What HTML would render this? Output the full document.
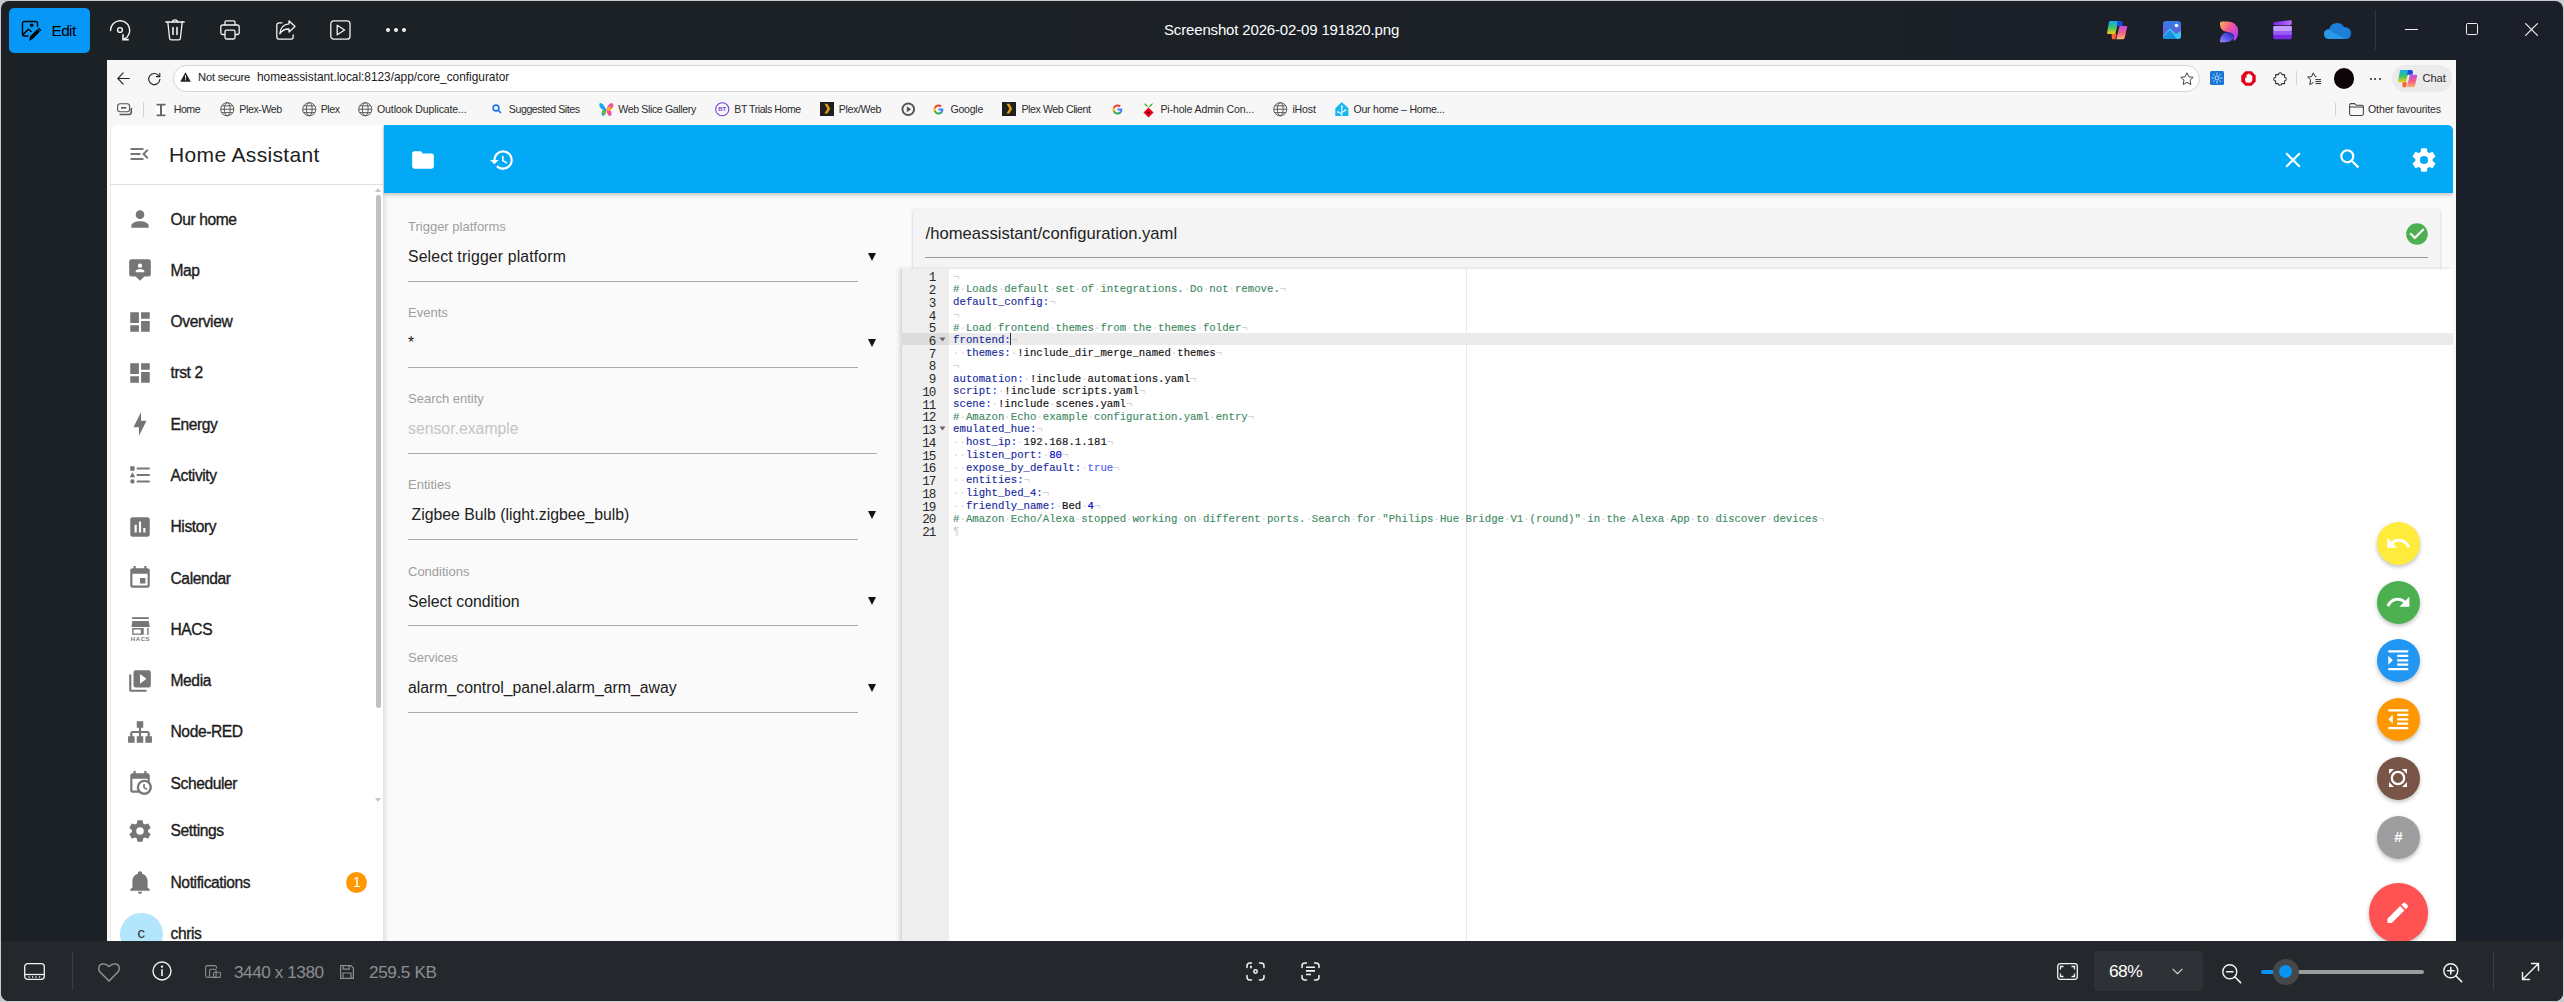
<!DOCTYPE html>
<html><head><meta charset="utf-8">
<style>
*{box-sizing:border-box;margin:0;padding:0}
html,body{width:2564px;height:1002px;overflow:hidden;background:#c9cacb;font-family:"Liberation Sans",sans-serif}
.a{position:absolute}
svg{position:absolute;overflow:visible}
#win{left:1px;top:1px;width:2562px;height:1000px;border-radius:8px;overflow:hidden;background:linear-gradient(90deg,#1c2125 0%,#1c2126 40%,#1b1f29 100%)}
#bot{left:0;top:940px;width:2562px;height:60px;background:#24282c}
#br{left:107px;top:60px;width:2349px;height:881px;background:#f7f7f7}
.bm{position:absolute;top:103px;font-size:10.6px;color:#2b2b2b;white-space:nowrap;letter-spacing:-0.15px}
#ha{left:110px;top:124.5px;width:2342.5px;height:816.5px;background:#fafafa;border-radius:7px 5px 0 0;overflow:hidden}
.si{position:absolute;left:60.5px;font-size:15.6px;color:#1c1c1c;white-space:nowrap;-webkit-text-stroke:0.35px #1c1c1c;letter-spacing:-0.4px}
.ic{position:absolute;left:20px;width:24px;height:24px}
.lab{position:absolute;left:298px;font-size:13px;color:#9e9e9e;white-space:nowrap}
.val{position:absolute;left:298px;font-size:15.8px;color:#212121;white-space:nowrap}
.ul{position:absolute;left:298px;width:451px;height:1px;background:#a8a8a8}
.arr{position:absolute;left:758px;width:0;height:0;border-left:4.5px solid transparent;border-right:4.5px solid transparent;border-top:8.5px solid #111}
.code{position:absolute;-webkit-text-stroke:0.15px currentColor;font-family:"Liberation Mono",monospace;font-size:10.68px;line-height:12.74px;white-space:pre}
.ln{position:absolute;left:0;width:35.5px;text-align:right;font-family:"Liberation Mono",monospace;font-size:12.6px;letter-spacing:-1.12px;line-height:12.74px;color:#2a2a2a}
.cm{color:#3f8a63}.ky{color:#1a2a9c}.kw{color:#2a3cf5}.nm{color:#0000cd}.bl{color:#585cf6}.tx{color:#111}.iv{color:#d2d2d2;-webkit-text-stroke:0}
.fab{position:absolute;border-radius:50%;box-shadow:0 2px 4px rgba(0,0,0,.25)}
</style></head><body>
<div id="win" class="a">
  <div id="bot" class="a"></div>
</div>
<!-- BOTTOM BAR -->
<svg style="left:23.5px;top:962.5px" width="21" height="17" viewBox="0 0 21 17" fill="none" stroke="#f2f2f2" stroke-width="1.3"><rect x="0.7" y="0.7" width="19.6" height="15.6" rx="3"/><path d="M0.7 11.5H20.3"/><path d="M4.5 14H5.7M8 14H9.2M11.5 14H12.7M15 14H16.2" stroke-width="1.6"/></svg>
<div class="a" style="left:72px;top:951px;width:1px;height:39px;background:#3a3e42"></div>
<svg style="left:97.5px;top:962.5px" width="22" height="19" viewBox="0 0 22 19" fill="none" stroke="#9a9c9e" stroke-width="1.3" stroke-linejoin="round"><path d="M11 18L2.3 9.3Q0.7 7.7 0.7 5.5Q0.7 0.8 5.6 0.8Q8.7 0.8 11 3.6Q13.3 0.8 16.4 0.8Q21.3 0.8 21.3 5.5Q21.3 7.7 19.7 9.3Z"/></svg>
<svg style="left:152px;top:961px" width="20" height="20" viewBox="0 0 20 20" fill="none" stroke="#f2f2f2" stroke-width="1.4"><circle cx="10" cy="10" r="9"/><path d="M10 8.3V15" stroke-width="1.6"/><circle cx="10" cy="5.6" r="0.5" fill="#f2f2f2"/></svg>
<svg style="left:204.5px;top:965px" width="16" height="13" viewBox="0 0 16 13" fill="none" stroke="#8c8e90" stroke-width="1.1"><path d="M11.5 3.5V2.5Q11.5 0.6 9.6 0.6H2.5Q0.6 0.6 0.6 2.5V10.5Q0.6 12.4 2.5 12.4H4.5"/><rect x="4.6" y="4.3" width="6.5" height="8.1" rx="1.5"/><rect x="8.5" y="7.3" width="6.9" height="5.1" rx="1"/></svg>
<div class="a" style="left:234px;top:962px;font-size:17.2px;color:#8c8e90;white-space:nowrap;letter-spacing:-0.45px">3440 x 1380</div>
<svg style="left:339.5px;top:965px" width="14" height="14" viewBox="0 0 14 14" fill="none" stroke="#8c8e90" stroke-width="1.2"><path d="M0.6 0.6H11L13.4 3V13.4H0.6Z"/><path d="M3.2 0.6V4.2H9.2V0.6M3 13.4V8H11V13.4"/></svg>
<div class="a" style="left:369px;top:962px;font-size:17.2px;color:#8c8e90;white-space:nowrap;letter-spacing:-0.4px">259.5 KB</div>
<svg style="left:1245.5px;top:961.5px" width="19" height="19" viewBox="0 0 19 19" fill="none" stroke="#f2f2f2" stroke-width="1.5" stroke-linecap="round"><path d="M1 5.5V4Q1 1 4 1H5.5M13.5 1H15Q18 1 18 4V5.5M18 13.5V15Q18 18 15 18H13.5M5.5 18H4Q1 18 1 15V13.5"/><circle cx="9.5" cy="9.5" r="1.7"/><path d="M5 4.5V5.5" stroke-width="1.8"/></svg>
<svg style="left:1300.5px;top:961.5px" width="19" height="19" viewBox="0 0 19 19" fill="none" stroke="#f2f2f2" stroke-width="1.5" stroke-linecap="round"><path d="M1 5.5V4Q1 1 4 1H5.5M13.5 1H15Q18 1 18 4V5.5M18 13.5V15Q18 18 15 18H13.5M5.5 18H4Q1 18 1 15V13.5"/><path d="M5 5.3H14M5 8.9H14M5 12.5H10" stroke-linecap="butt" stroke-width="1.6"/></svg>
<svg style="left:2056.5px;top:962.5px" width="21" height="17" viewBox="0 0 21 17" fill="none" stroke="#f2f2f2" stroke-width="1.3"><rect x="0.7" y="0.7" width="19.6" height="15.6" rx="2.5"/><path d="M3.5 6.5V3.5H6.5M14.5 3.5H17.5V6.5M17.5 10.5V13.5H14.5M6.5 13.5H3.5V10.5"/></svg>
<div class="a" style="left:2094.3px;top:951px;width:108.5px;height:39.5px;border-radius:4px;background:#2e3236"></div>
<div class="a" style="left:2109px;top:961px;font-size:17.4px;color:#fff;white-space:nowrap;letter-spacing:-0.6px">68%</div>
<svg style="left:2172px;top:967.5px" width="11" height="7" viewBox="0 0 11 7" fill="none" stroke="#d8d8d8" stroke-width="1.1"><path d="M0.6 0.8L5.5 5.7L10.4 0.8"/></svg>
<svg style="left:2221.5px;top:963.5px" width="20" height="20" viewBox="0 0 20 20" fill="none" stroke="#f2f2f2" stroke-width="1.4" stroke-linecap="round"><circle cx="7.8" cy="7.8" r="7"/><path d="M12.8 12.8L18.6 18.6M4.6 7.8H11" stroke-width="1.6"/></svg>
<div class="a" style="left:2261px;top:969.5px;width:20px;height:4px;border-radius:2px;background:#0a93f5"></div>
<div class="a" style="left:2290px;top:969.5px;width:134px;height:4px;border-radius:2px;background:#9a9c9e"></div>
<div class="a" style="left:2272.5px;top:958.5px;width:26px;height:26px;border-radius:50%;background:#454749"></div>
<div class="a" style="left:2279px;top:965px;width:13px;height:13px;border-radius:50%;background:#0a93f5"></div>
<svg style="left:2442.5px;top:963px" width="20" height="20" viewBox="0 0 20 20" fill="none" stroke="#f2f2f2" stroke-width="1.4" stroke-linecap="round"><circle cx="7.8" cy="7.8" r="7"/><path d="M12.8 12.8L18.6 18.6M4.6 7.8H11M7.8 4.6V11" stroke-width="1.6"/></svg>
<div class="a" style="left:2492.5px;top:951px;width:1px;height:39px;background:#3a3e42"></div>
<svg style="left:2521px;top:962px" width="19" height="19" viewBox="0 0 19 19" fill="none" stroke="#f2f2f2" stroke-width="1.4" stroke-linecap="round"><path d="M1.5 17.5L17.5 1.5M10.5 1.5H17.5V8.5M1.5 10.5V17.5H8.5"/></svg>
<!-- TITLE BAR -->
<div class="a" style="left:9px;top:8px;width:81px;height:45px;border-radius:5px;background:#0797f6"></div>
<svg style="left:19.8px;top:19.5px" width="22" height="22" viewBox="0 0 22 22" fill="none" stroke="#000" stroke-width="1.4">
  <path d="M2.5 14V3.5Q2.5 1.5 4.5 1.5H15.5Q17.5 1.5 17.5 3.5V7"/>
  <path d="M2.5 14Q2.5 16 4.5 16H8.5"/>
  <path d="M3 14.5L8.5 9.2L11.5 11.8"/>
  <circle cx="11.7" cy="5.2" r="1.1"/>
  <path d="M9 21L10.3 16.3L17.3 9.3L19.8 11.8L12.8 18.8Z" fill="#000" stroke="none"/>
  <path d="M17.8 8.8L18.9 7.7L21.3 10.1L20.2 11.2Z" fill="#000" stroke="none"/>
</svg>
<div class="a" style="left:51.5px;top:21.5px;font-size:15.4px;color:#000;letter-spacing:-0.6px">Edit</div>
<!-- rotate -->
<svg style="left:105px;top:15px" width="30" height="30" viewBox="0 0 30 30" fill="none" stroke="#f4f4f4" stroke-width="1.4" stroke-linecap="round">
  <path d="M5.5 15.5A9.6 9.6 0 1 1 19.3 24"/>
  <path d="M18 19.3V24.6H23.8" stroke-linecap="butt" stroke-width="1.6"/>
  <circle cx="15" cy="15" r="2.4"/>
</svg>
<!-- trash -->
<svg style="left:165px;top:19px" width="21" height="22" viewBox="0 0 21 22" fill="none" stroke="#f2f2f2" stroke-width="1.3" stroke-linecap="round">
  <path d="M0.8 3H19.2"/><path d="M7.5 3Q7.5 0.8 10 0.8Q12.5 0.8 12.5 3"/>
  <path d="M2.8 3L4.6 19.3Q4.8 20.8 6.3 20.8H13.7Q15.2 20.8 15.4 19.3L17.2 3"/>
  <path d="M8 8.5V15.5M12 8.5V15.5" stroke-width="1.6"/>
</svg>
<!-- print -->
<svg style="left:220px;top:20px" width="21" height="20" viewBox="0 0 21 20" fill="none" stroke="#f2f2f2" stroke-width="1.3" stroke-linejoin="round">
  <path d="M5 5V2.2Q5 0.8 6.4 0.8H13.6Q15 0.8 15 2.2V5"/>
  <path d="M5 14.5H2.8Q0.8 14.5 0.8 12.5V7Q0.8 5 2.8 5H17.2Q19.2 5 19.2 7V12.5Q19.2 14.5 17.2 14.5H15"/>
  <rect x="5" y="10.2" width="10" height="8.8" rx="1.4"/>
</svg>
<!-- share -->
<svg style="left:276px;top:20px" width="20" height="20" viewBox="0 0 20 20" fill="none" stroke="#f2f2f2" stroke-width="1.3" stroke-linejoin="round" stroke-linecap="round">
  <path d="M6 2.8H3.3Q0.8 2.8 0.8 5.3V16.7Q0.8 19.2 3.3 19.2H14.7Q17.2 19.2 17.2 16.7V15"/>
  <path d="M13 0.8L19 6.4L13 12V9Q7 8.7 3.8 13.8Q4.5 4.5 13 3.8Z"/>
</svg>
<!-- slideshow -->
<svg style="left:330px;top:20px" width="21" height="20" viewBox="0 0 21 20" fill="none" stroke="#f2f2f2" stroke-width="1.3" stroke-linejoin="round">
  <rect x="0.8" y="0.8" width="19.2" height="18.4" rx="3"/>
  <path d="M7.2 5.2L14.6 10L7.2 14.8Z"/>
</svg>
<div class="a" style="left:386px;top:28px;width:4px;height:4px;border-radius:2px;background:#f2f2f2"></div>
<div class="a" style="left:394px;top:28px;width:4px;height:4px;border-radius:2px;background:#f2f2f2"></div>
<div class="a" style="left:402px;top:28px;width:4px;height:4px;border-radius:2px;background:#f2f2f2"></div>
<div class="a" style="left:1164px;top:21px;font-size:15px;color:#fff;white-space:nowrap;letter-spacing:-0.16px">Screenshot 2026-02-09 191820.png</div>
<!-- app icons right -->
<svg style="left:2100px;top:15px" width="30" height="30" viewBox="0 0 30 30">
  <defs><linearGradient id="cp1" x1="0" y1="0" x2="0" y2="1"><stop offset="0" stop-color="#14a8f5"/><stop offset=".5" stop-color="#3cc46a"/><stop offset="1" stop-color="#f7d10a"/></linearGradient>
  <linearGradient id="cp2" x1="0" y1="0" x2="0" y2="1"><stop offset="0" stop-color="#b84ee8"/><stop offset=".5" stop-color="#f25e8a"/><stop offset="1" stop-color="#fdb46c"/></linearGradient></defs>
  <path d="M9.6 6H17.6Q18.6 6 18.3 7.1L15.3 19H8.1Q6.8 19 7.1 17.7L9 6.9Q9.2 6 9.6 6Z" fill="url(#cp1)"/>
  <path d="M17.6 6H20.8Q22.8 6 22.6 8.3L22.3 11.1H16.6Z" fill="#1f46dd"/>
  <path d="M20.1 10.9H26Q27.3 10.9 27.1 12.2L24.8 22.6Q24.4 24.2 23 24.2H16.3L19.3 11.7Q19.5 10.9 20.1 10.9Z" fill="url(#cp2)"/>
  <path d="M11.6 19H16.6L15.3 24.2H13.1Q11.6 24.2 11.8 22.7Z" fill="#ff5f3a"/>
</svg>
<svg style="left:2163px;top:21px" width="18" height="18" viewBox="0 0 18 18">
  <defs><linearGradient id="ph" x1="0" y1="0" x2="0" y2="1"><stop offset="0" stop-color="#2f7fe6"/><stop offset="1" stop-color="#7b4fd8"/></linearGradient></defs>
  <rect width="18" height="18" rx="3" fill="url(#ph)"/>
  <path d="M0 15L7 7L13 13L18 10V15Q18 18 15 18H3Q0 18 0 15Z" fill="#3cc3f5"/>
  <path d="M0 16L7 9L14 18H3Q0 18 0 16Z" fill="#1a8fe0"/>
  <circle cx="13.5" cy="4.5" r="1.8" fill="#fff"/>
</svg>
<svg style="left:2219.8px;top:20.7px" width="18.5" height="21.5" viewBox="0 0 18.5 21.5">
  <defs><linearGradient id="dz1" x1="0" y1="0" x2="1" y2="0.7"><stop offset="0" stop-color="#ffb347"/><stop offset=".5" stop-color="#f2569a"/><stop offset="1" stop-color="#b23cf5"/></linearGradient>
  <linearGradient id="dz2" x1="0" y1="1" x2="1" y2="0"><stop offset="0" stop-color="#a98bff"/><stop offset=".4" stop-color="#5a5cf0"/><stop offset="1" stop-color="#22209a"/></linearGradient></defs>
  <path d="M0 2Q0 0.5 2 0.5H7.5Q18.2 0.8 18.2 11Q18.2 17.5 13.8 20Q13.5 11.5 6.5 10.8Q0 10 0 3Z" fill="url(#dz1)"/>
  <path d="M0 21.2Q0 11.5 8 11.2Q13.2 11.2 14.3 15.3Q12.2 21.2 5.5 21.2Z" fill="url(#dz2)"/>
</svg>
<svg style="left:2272.5px;top:20px" width="19" height="19.5" viewBox="0 0 19 19.5">
  <defs><linearGradient id="cl1" x1="0" y1="0" x2="1" y2="0"><stop offset="0" stop-color="#7a22e8"/><stop offset="1" stop-color="#c070ff"/></linearGradient></defs>
  <path d="M0.3 3.5Q0.3 2.2 2 2L17.5 0.2Q18.7 0.2 18.7 1.5V3.5Q18.7 5 17 5.2H2Q0.3 5.2 0.3 4Z" fill="url(#cl1)"/>
  <rect x="0.3" y="6" width="18.5" height="13.3" rx="1.8" fill="#7d2ae8"/>
  <rect x="0.3" y="6" width="18.5" height="5" rx="1.2" fill="#c49cff"/>
  <rect x="0.3" y="11" width="18.5" height="3.8" fill="#9b5cf5"/>
</svg>
<svg style="left:2324px;top:22px" width="27" height="17" viewBox="0 0 27 17">
  <path d="M6 17Q0 17 0 12Q0 7.5 5 7Q7 1 13 1Q18 1 20 5Q27 5 27 11.5Q27 17 21 17Z" fill="#1e7fd8"/>
  <path d="M6 17Q0 17 0 12Q0 8.5 4 7.5L12 12L21 17Z" fill="#2a9ae8"/>
</svg>
<div class="a" style="left:2375px;top:10px;width:1px;height:40px;background:#32363d"></div>
<div class="a" style="left:2405px;top:28.5px;width:13px;height:1.2px;background:#f0f0f0"></div>
<div class="a" style="left:2466px;top:23px;width:12px;height:12px;border:1.2px solid #f0f0f0;border-radius:1.5px"></div>
<svg style="left:2525px;top:22.5px" width="13" height="13" viewBox="0 0 13 13" stroke="#f0f0f0" stroke-width="1.2" stroke-linecap="round"><path d="M0.6 0.6L12.4 12.4M12.4 0.6L0.6 12.4"/></svg>

<div id="br" class="a"></div>
<!-- BROWSER TOOLBAR -->
<svg style="left:117px;top:72px" width="13" height="13" viewBox="0 0 13 13" fill="none" stroke="#222" stroke-width="1.1" stroke-linecap="round"><path d="M12.3 6.5H0.8M6.2 0.9L0.8 6.5L6.2 12.1"/></svg>
<svg style="left:148px;top:72px" width="13" height="13" viewBox="0 0 13 13" fill="none" stroke="#222" stroke-width="1.1" stroke-linecap="round"><path d="M11.2 4.3A5.6 5.6 0 1 0 11.9 7.4"/><path d="M11.8 1.2V4.6H8.4" stroke-linejoin="round"/></svg>
<div class="a" style="left:172.5px;top:65px;width:2027px;height:26.5px;border-radius:13.5px;background:#fff;border:1px solid #d4d4d4"></div>
<svg style="left:180px;top:72px" width="11" height="10" viewBox="0 0 11 10"><path d="M5.5 0.3L10.8 9.7H0.2Z" fill="#222"/><path d="M5 3.2H6V6.4H5ZM5 7.3H6V8.3H5Z" fill="#fff"/></svg>
<div class="a" style="left:198px;top:71px;font-size:11.2px;color:#333;white-space:nowrap;letter-spacing:-0.2px;-webkit-text-stroke:0.15px #333">Not secure</div>
<div class="a" style="left:257px;top:70px;font-size:11.9px;color:#1b1b1b;white-space:nowrap;letter-spacing:-0.02px">homeassistant.local:8123/app/core_configurator</div>
<svg style="left:2180px;top:71.5px" width="14" height="14" viewBox="0 0 14 14" fill="none" stroke="#444" stroke-width="1" stroke-linejoin="round"><path d="M7 0.8L8.9 4.8L13.2 5.3L10 8.2L10.9 12.5L7 10.4L3.1 12.5L4 8.2L0.8 5.3L5.1 4.8Z"/></svg>
<div class="a" style="left:2210px;top:71.3px;width:14px;height:14px;border-radius:1.5px;background:#1976d2"></div>
<svg style="left:2210px;top:71.3px" width="14" height="14" viewBox="0 0 14 14" fill="none" stroke="#cfe6ff" stroke-width="0.9"><circle cx="7" cy="7" r="2"/><path d="M7 1.5V3.8M7 10.2V12.5M1.5 7H3.8M10.2 7H12.5M3.1 3.1L4.7 4.7M9.3 9.3L10.9 10.9M10.9 3.1L9.3 4.7M4.7 9.3L3.1 10.9"/></svg>
<svg style="left:2240.5px;top:71px" width="15" height="15" viewBox="0 0 15 15"><path d="M4.4 0.3H10.6L14.7 4.4V10.6L10.6 14.7H4.4L0.3 10.6V4.4Z" fill="#e0001b"/><path d="M5 11.5Q3.8 9 4 7.5L4.6 6.2L5.5 7.6V4Q5.5 3.2 6.3 3.2Q7 3.2 7 4V3.3Q7 2.6 7.8 2.6Q8.5 2.6 8.5 3.3V4Q8.5 3.3 9.3 3.3Q10 3.3 10 4V5Q10 4.4 10.7 4.4Q11.3 4.4 11.3 5.1V8.5Q11.3 11.5 8.5 11.8Z" fill="#fff"/></svg>
<svg style="left:2272.5px;top:71.5px" width="14" height="14" viewBox="0 0 14 14" fill="none" stroke="#333" stroke-width="1.05" stroke-linejoin="round"><path d="M5.6 2.6Q5.6 0.7 7.3 0.7Q9 0.7 9 2.6H11.6V5.3Q13.3 5.3 13.3 7Q13.3 8.7 11.6 8.7V11.6H8.7Q8.7 13.3 7 13.3Q5.3 13.3 5.3 11.6H2.6V8.8Q0.7 8.8 0.7 7.1Q0.7 5.4 2.6 5.4V2.6Z"/></svg>
<div class="a" style="left:2295.5px;top:71px;width:1px;height:14px;background:#d6d6d6"></div>
<svg style="left:2306.5px;top:71.5px" width="15" height="14" viewBox="0 0 15 14" fill="none" stroke="#333" stroke-width="1" stroke-linejoin="round"><path d="M6.3 0.8L8 4.5L9.5 4.7M3.6 7.7L0.7 5.1L4.6 4.6L6.3 0.8M3.6 7.7L2.8 12.6L6.6 10.5"/><path d="M8.5 7.6H14M8.5 9.6H14M8.5 11.6H14"/></svg>
<div class="a" style="left:2333.7px;top:68px;width:20.5px;height:20.5px;border-radius:50%;background:#0d0507"></div>
<div class="a" style="left:2369.5px;top:77.5px;width:2.2px;height:2.2px;border-radius:50%;background:#222"></div>
<div class="a" style="left:2374px;top:77.5px;width:2.2px;height:2.2px;border-radius:50%;background:#222"></div>
<div class="a" style="left:2378.5px;top:77.5px;width:2.2px;height:2.2px;border-radius:50%;background:#222"></div>
<div class="a" style="left:2392.3px;top:65px;width:59.5px;height:26.5px;border-radius:13.5px;background:#ebebeb"></div>
<svg style="left:2398px;top:69.5px" width="19.5" height="17.5" viewBox="7 6 20.5 18.4">
  <path d="M9.6 6H17.6Q18.6 6 18.3 7.1L15.3 19H8.1Q6.8 19 7.1 17.7L9 6.9Q9.2 6 9.6 6Z" fill="url(#cp1)"/>
  <path d="M17.6 6H20.8Q22.8 6 22.6 8.3L22.3 11.1H16.6Z" fill="#1f46dd"/>
  <path d="M20.1 10.9H26Q27.3 10.9 27.1 12.2L24.8 22.6Q24.4 24.2 23 24.2H16.3L19.3 11.7Q19.5 10.9 20.1 10.9Z" fill="url(#cp2)"/>
  <path d="M11.6 19H16.6L15.3 24.2H13.1Q11.6 24.2 11.8 22.7Z" fill="#ff5f3a"/>
</svg>
<div class="a" style="left:2422.5px;top:71.5px;font-size:11.2px;color:#2a2a2a;white-space:nowrap;letter-spacing:-0.1px">Chat</div>
<!-- BOOKMARKS -->
<svg style="left:117px;top:102.5px" width="15" height="13" viewBox="0 0 15 13" fill="none" stroke="#555" stroke-width="1.1"><rect x="0.6" y="0.8" width="12" height="8" rx="2.5"/><path d="M4 4.8H9.3" stroke-width="1.6"/><path d="M2.5 11.5H12Q14.3 11.5 14.3 9V5" stroke-width="1.5"/></svg>
<div class="a" style="left:143px;top:102px;width:1px;height:15px;background:#d4d4d4"></div>
<svg style="left:155px;top:101.5px" width="12" height="16" viewBox="0 0 12 16"><rect width="12" height="16" fill="#fff" opacity=".6"/><path d="M1.5 1.8H10.5V3.5H7V12.5H10.5V14.2H1.5V12.5H5V3.5H1.5Z" fill="#666"/></svg>
<div class="bm" style="left:173.8px;letter-spacing:-0.50px">Home</div>
<svg style="left:220px;top:102px" width="14.5" height="14.5" viewBox="0 0 15 15" fill="none" stroke="#555" stroke-width="1"><circle cx="7.5" cy="7.5" r="6.8"/><ellipse cx="7.5" cy="7.5" rx="3" ry="6.8"/><path d="M0.7 7.5H14.3M1.8 4H13.2M1.8 11H13.2"/></svg>
<div class="bm" style="left:239.3px;letter-spacing:-0.40px">Plex-Web</div>
<svg style="left:301.7px;top:102px" width="14.5" height="14.5" viewBox="0 0 15 15" fill="none" stroke="#555" stroke-width="1"><circle cx="7.5" cy="7.5" r="6.8"/><ellipse cx="7.5" cy="7.5" rx="3" ry="6.8"/><path d="M0.7 7.5H14.3M1.8 4H13.2M1.8 11H13.2"/></svg>
<div class="bm" style="left:320.7px;letter-spacing:-0.45px">Plex</div>
<svg style="left:358.3px;top:102px" width="14.5" height="14.5" viewBox="0 0 15 15" fill="none" stroke="#555" stroke-width="1"><circle cx="7.5" cy="7.5" r="6.8"/><ellipse cx="7.5" cy="7.5" rx="3" ry="6.8"/><path d="M0.7 7.5H14.3M1.8 4H13.2M1.8 11H13.2"/></svg>
<div class="bm" style="left:377px">Outlook Duplicate...</div>
<svg style="left:492px;top:104px" width="10" height="10" viewBox="0 0 10 10" fill="none" stroke="#1a73e8" stroke-width="1.6"><circle cx="4" cy="4" r="2.9"/><path d="M6.2 6.2L9 9"/></svg>
<div class="bm" style="left:508.8px;letter-spacing:-0.42px">Suggested Sites</div>
<svg style="left:599px;top:102px" width="15" height="15" viewBox="0 0 15 15"><path d="M7 7Q3 -1 0.5 1.5Q-0.5 5 4 8Q1 12 4 14Q6 14 7 9Z" fill="#1fa6e8"/><path d="M7.5 7Q10 0 14 1.5Q15.5 5 11 8Q14 11 11.5 14Q8.5 14 7.5 9Z" fill="#f24e9b"/><path d="M7.5 7Q9 4 12 5Q12 8 9 9Z" fill="#ffb900"/><path d="M3 9Q4 14 6.5 12L7 9Z" fill="#7fba00"/></svg>
<div class="bm" style="left:618.3px;letter-spacing:-0.38px">Web Slice Gallery</div>
<svg style="left:714.8px;top:102px" width="14.5" height="14.5" viewBox="0 0 15 15"><circle cx="7.5" cy="7.5" r="6.8" fill="none" stroke="#7b3fd6" stroke-width="1.1"/><text x="7.5" y="9.8" font-size="6.2" font-family="Liberation Sans" font-weight="bold" fill="#7b3fd6" text-anchor="middle">BT</text></svg>
<div class="bm" style="left:734.3px;letter-spacing:-0.45px">BT Trials Home</div>
<div class="a" style="left:819.8px;top:102.4px;width:14px;height:13.3px;background:#1f1f1f"></div>
<svg style="left:819.8px;top:102.4px" width="14" height="13.3" viewBox="0 0 14 13.3"><path d="M4.5 1.8H7.3L10.2 6.65L7.3 11.5H4.5L7.4 6.65Z" fill="#e5a00d"/></svg>
<div class="bm" style="left:838.8px;letter-spacing:-0.35px">Plex/Web</div>
<svg style="left:901px;top:102px" width="14.5" height="14.5" viewBox="0 0 15 15"><circle cx="7.5" cy="7.5" r="6" fill="none" stroke="#555" stroke-width="2"/><path d="M6 4.5L10.5 7.5L6 10.5Z" fill="#555"/></svg>
<svg style="left:933px;top:103.5px" width="11" height="11" viewBox="0 0 24 24"><path d="M22.5 12.3c0-.8-.1-1.5-.2-2.3H12v4.3h5.9a5 5 0 0 1-2.2 3.3v2.7h3.5c2.1-1.9 3.3-4.7 3.3-8z" fill="#4285f4"/><path d="M12 23c3 0 5.4-1 7.2-2.7l-3.5-2.7c-1 .7-2.2 1-3.7 1-2.9 0-5.3-1.9-6.2-4.6H2.2v2.8A11 11 0 0 0 12 23z" fill="#34a853"/><path d="M5.8 14a6.6 6.6 0 0 1 0-4.2V7H2.2a11 11 0 0 0 0 9.9z" fill="#fbbc05"/><path d="M12 5.4c1.6 0 3.1.6 4.2 1.6l3.1-3.1A11 11 0 0 0 2.2 7l3.6 2.8C6.7 7.2 9.1 5.4 12 5.4z" fill="#ea4335"/></svg>
<div class="bm" style="left:950.4px;letter-spacing:-0.25px">Google</div>
<div class="a" style="left:1001.9px;top:102.4px;width:14px;height:13.3px;background:#1f1f1f"></div>
<svg style="left:1001.9px;top:102.4px" width="14" height="13.3" viewBox="0 0 14 13.3"><path d="M4.5 1.8H7.3L10.2 6.65L7.3 11.5H4.5L7.4 6.65Z" fill="#e5a00d"/></svg>
<div class="bm" style="left:1021.4px;letter-spacing:-0.40px">Plex Web Client</div>
<svg style="left:1112px;top:103.5px" width="11" height="11" viewBox="0 0 24 24"><path d="M22.5 12.3c0-.8-.1-1.5-.2-2.3H12v4.3h5.9a5 5 0 0 1-2.2 3.3v2.7h3.5c2.1-1.9 3.3-4.7 3.3-8z" fill="#4285f4"/><path d="M12 23c3 0 5.4-1 7.2-2.7l-3.5-2.7c-1 .7-2.2 1-3.7 1-2.9 0-5.3-1.9-6.2-4.6H2.2v2.8A11 11 0 0 0 12 23z" fill="#34a853"/><path d="M5.8 14a6.6 6.6 0 0 1 0-4.2V7H2.2a11 11 0 0 0 0 9.9z" fill="#fbbc05"/><path d="M12 5.4c1.6 0 3.1.6 4.2 1.6l3.1-3.1A11 11 0 0 0 2.2 7l3.6 2.8C6.7 7.2 9.1 5.4 12 5.4z" fill="#ea4335"/></svg>
<svg style="left:1142.8px;top:101.5px" width="11" height="16" viewBox="0 0 11 16"><path d="M5.5 5.5L10.5 10.5L5.5 15.5L0.5 10.5Z" fill="#e8001c"/><circle cx="5.5" cy="10.5" r="1" fill="#000"/><path d="M5.5 5.5Q3 1 1 1.5Q2 4.5 5.5 5.5Q8 1 10 1.5Q9 4.5 5.5 5.5" fill="#3fae2a"/></svg>
<div class="bm" style="left:1160.4px">Pi-hole Admin Con...</div>
<svg style="left:1272.8px;top:102px" width="14.5" height="14.5" viewBox="0 0 15 15" fill="none" stroke="#555" stroke-width="1"><circle cx="7.5" cy="7.5" r="6.8"/><ellipse cx="7.5" cy="7.5" rx="3" ry="6.8"/><path d="M0.7 7.5H14.3M1.8 4H13.2M1.8 11H13.2"/></svg>
<div class="bm" style="left:1292.4px">iHost</div>
<svg style="left:1334.7px;top:102px" width="13.7" height="14" viewBox="0 0 13.7 14"><path d="M6.85 0.1L13.4 6.3V14H0.3V6.3Z" fill="#18b6f0"/><path d="M6.85 5V14M6.85 12.2L3.2 10M6.85 10.6L10.2 8.3" stroke="#eaf7fd" stroke-width="1.1" fill="none"/><circle cx="6.85" cy="4.6" r="1.1" fill="#eaf7fd"/><circle cx="3.1" cy="9.9" r="1" fill="#eaf7fd"/><circle cx="10.3" cy="8.2" r="1" fill="#eaf7fd"/></svg>
<div class="bm" style="left:1353.5px;letter-spacing:-0.27px">Our home – Home...</div>
<div class="a" style="left:2334.5px;top:102.5px;width:1px;height:13px;background:#d4d4d4"></div>
<svg style="left:2348.5px;top:102.5px" width="15" height="13" viewBox="0 0 15 13" fill="none" stroke="#444" stroke-width="1.05" stroke-linejoin="round"><path d="M0.6 2.2Q0.6 0.6 2.2 0.6H5.6L7.2 2.2H12.8Q14.4 2.2 14.4 3.8V10.8Q14.4 12.4 12.8 12.4H2.2Q0.6 12.4 0.6 10.8Z"/><path d="M0.6 4H14.4"/></svg>
<div class="bm" style="left:2368px">Other favourites</div>
<div id="ha" class="a">
<div class="a" style="left:0;top:0;width:274px;height:816px;background:#fff;border-right:1px solid #e4e4e4;border-left:1px solid #ececec;border-top-left-radius:7px"></div>
<div class="a" style="left:274px;top:68px;width:4px;height:748px;background:linear-gradient(90deg,#e6e6e6,#fafafa)"></div>
<div class="a" style="left:0;top:59px;width:274px;height:1px;background:#e0e0e0"></div>
<svg style="left:17.3px;top:17px" width="24" height="24" viewBox="0 0 24 24"><path d="M21,15.61L19.59,17L14.58,12L19.59,7L21,8.39L17.44,12L21,15.61M3,6H16V8H3V6M3,13V11H13V13H3M3,18V16H16V18H3Z" fill="#767676" transform="translate(0.5,0) scale(1)"/></svg>
<div class="a" style="left:59px;top:18px;font-size:21px;color:#212121;white-space:nowrap;letter-spacing:0.35px">Home Assistant</div>
<div class="si" style="top:86.0px">Our home</div>
<svg style="left:17.3px;top:81.5px" width="26" height="26" viewBox="0 0 24 24"><path d="M12,4A4,4 0 0,1 16,8A4,4 0 0,1 12,12A4,4 0 0,1 8,8A4,4 0 0,1 12,4M12,14C16.42,14 20,15.79 20,18V20H4V18C4,15.79 7.58,14 12,14Z" fill="#767676"/></svg>
<div class="si" style="top:137.2px">Map</div>
<svg style="left:17.3px;top:132.7px" width="26" height="26" viewBox="0 0 24 24"><path d="M2,4C2,2.89 2.9,2 4,2H20A2,2 0 0,1 22,4V16A2,2 0 0,1 20,18H16L12,22L8,18H4A2,2 0 0,1 2,16V4M16,14V13C16,11.67 13.33,11 12,11C10.67,11 8,11.67 8,13V14H16M12,6A2,2 0 0,0 10,8A2,2 0 0,0 12,10A2,2 0 0,0 14,8A2,2 0 0,0 12,6Z" fill="#767676"/></svg>
<div class="si" style="top:188.5px">Overview</div>
<svg style="left:17.3px;top:184.0px" width="26" height="26" viewBox="0 0 24 24"><path d="M13,3V9H21V3M13,21H21V11H13M3,21H11V15H3M3,13H11V3H3V13Z" fill="#767676"/></svg>
<div class="si" style="top:239.8px">trst 2</div>
<svg style="left:17.3px;top:235.3px" width="26" height="26" viewBox="0 0 24 24"><path d="M13,3V9H21V3M13,21H21V11H13M3,21H11V15H3M3,13H11V3H3V13Z" fill="#767676"/></svg>
<div class="si" style="top:291.1px">Energy</div>
<svg style="left:17.3px;top:286.6px" width="26" height="26" viewBox="0 0 24 24"><path d="M11 15H6L13 1V9H18L11 23V15Z" fill="#767676"/></svg>
<div class="si" style="top:342.4px">Activity</div>
<svg style="left:17.3px;top:337.9px" width="26" height="26" viewBox="0 0 24 24"><path d="M5,9.5L7.5,14H2.5L5,9.5M3,4H7V8H3V4M5,20A2,2 0 0,0 7,18A2,2 0 0,0 5,16A2,2 0 0,0 3,18A2,2 0 0,0 5,20M9,5V7H21V5H9M9,19H21V17H9V19M9,13H21V11H9V13Z" fill="#767676"/></svg>
<div class="si" style="top:393.7px">History</div>
<svg style="left:17.3px;top:389.2px" width="26" height="26" viewBox="0 0 24 24"><path d="M19 3H5C3.9 3 3 3.9 3 5V19C3 20.1 3.9 21 5 21H19C20.1 21 21 20.1 21 19V5C21 3.9 20.1 3 19 3M9 17H7V10H9V17M13 17H11V7H13V17M17 17H15V13H17V17Z" fill="#767676"/></svg>
<div class="si" style="top:445.0px">Calendar</div>
<svg style="left:17.3px;top:440.5px" width="26" height="26" viewBox="0 0 24 24"><path d="M19,19H5V8H19M16,1V3H8V1H6V3H5C3.89,3 3,3.89 3,5V19A2,2 0 0,0 5,21H19A2,2 0 0,0 21,19V5C21,3.89 20.1,3 19,3H18V1M17,12H12V17H17V12Z" fill="#767676"/></svg>
<div class="si" style="top:496.3px">HACS</div>
<svg style="left:15px;top:487.5px" width="32" height="32" viewBox="0 0 32 32"><path d="M7.2 5.2H23.8V7H7.2Z" fill="#767676"/><path d="M7.3 8.9H23.7L24.8 14.9H6.5Z" fill="#767676"/><path d="M7.2 16H23.6V22.8H7.2Z" fill="#767676"/><path d="M8.6 17.4H15.8V21.4H8.6Z M18.7 16H22.2V22.8H18.7Z" fill="#fff"/><text x="15.5" y="28.9" font-size="6" font-family="Liberation Sans" font-weight="bold" fill="#767676" text-anchor="middle" letter-spacing="0.6">HACS</text></svg>
<div class="si" style="top:547.6px">Media</div>
<svg style="left:17.3px;top:543.1px" width="26" height="26" viewBox="0 0 24 24"><path d="M4,6H2V20A2,2 0 0,0 4,22H18V20H4V6M20,2H8A2,2 0 0,0 6,4V16A2,2 0 0,0 8,18H20A2,2 0 0,0 22,16V4A2,2 0 0,0 20,2M12,14.5V5.5L18,10L12,14.5Z" fill="#767676"/></svg>
<div class="si" style="top:598.9px">Node-RED</div>
<svg style="left:17.3px;top:594.4px" width="26" height="26" viewBox="0 0 24 24"><path d="M9,2V8H11V11H5C3.89,11 3,11.89 3,13V16H1V22H7V16H5V13H11V16H9V22H15V16H13V13H19V16H17V22H23V16H21V13C21,11.89 20.11,11 19,11H13V8H15V2H9Z" fill="#767676"/></svg>
<div class="si" style="top:650.2px">Scheduler</div>
<svg style="left:17.3px;top:645.7px" width="26" height="26" viewBox="0 0 24 24"><path d="M15,13H16.5V15.82L18.94,17.23L18.19,18.53L15,16.69V13M19,8H5V19H9.67C9.24,18.09 9,17.07 9,16A7,7 0 0,1 16,9C17.07,9 18.09,9.24 19,9.67V8M5,21C3.89,21 3,20.1 3,19V5C3,3.89 3.89,3 5,3H6V1H8V3H16V1H18V3H19A2,2 0 0,1 21,5V11.1C22.24,12.36 23,14.09 23,16A7,7 0 0,1 16,23C14.09,23 12.36,22.24 11.1,21H5M16,11.15A4.85,4.85 0 0,0 11.15,16C11.15,18.68 13.32,20.85 16,20.85A4.85,4.85 0 0,0 20.85,16C20.85,13.32 18.68,11.15 16,11.15Z" fill="#767676"/></svg>
<div class="si" style="top:697.8px">Settings</div>
<svg style="left:17.3px;top:693.3px" width="26" height="26" viewBox="0 0 24 24"><path d="M12,15.5A3.5,3.5 0 0,1 8.5,12A3.5,3.5 0 0,1 12,8.5A3.5,3.5 0 0,1 15.5,12A3.5,3.5 0 0,1 12,15.5M19.43,12.97C19.47,12.65 19.5,12.33 19.5,12C19.5,11.67 19.47,11.34 19.43,11L21.54,9.37C21.73,9.22 21.78,8.95 21.66,8.73L19.66,5.27C19.54,5.05 19.27,4.96 19.05,5.05L16.56,6.05C16.04,5.66 15.5,5.32 14.87,5.07L14.5,2.42C14.46,2.18 14.25,2 14,2H10C9.75,2 9.54,2.18 9.5,2.42L9.13,5.07C8.5,5.32 7.96,5.66 7.44,6.05L4.95,5.05C4.73,4.96 4.46,5.05 4.34,5.27L2.34,8.73C2.21,8.95 2.27,9.22 2.46,9.37L4.57,11C4.53,11.34 4.5,11.67 4.5,12C4.5,12.33 4.53,12.65 4.57,12.97L2.46,14.63C2.27,14.78 2.21,15.05 2.34,15.27L4.34,18.73C4.46,18.95 4.73,19.03 4.95,18.95L7.44,17.94C7.96,18.34 8.5,18.68 9.13,18.93L9.5,21.58C9.54,21.82 9.75,22 10,22H14C14.25,22 14.46,21.82 14.5,21.58L14.87,18.93C15.5,18.67 16.04,18.34 16.56,17.94L19.05,18.95C19.27,19.03 19.54,18.95 19.66,18.73L21.66,15.27C21.78,15.05 21.73,14.78 21.54,14.63L19.43,12.97Z" fill="#767676"/></svg>
<div class="si" style="top:749.2px">Notifications</div>
<svg style="left:17.3px;top:744.7px" width="26" height="26" viewBox="0 0 24 24"><path d="M21,19V20H3V19L5,17V11C5,7.9 7.03,5.17 10,4.29C10,4.19 10,4.1 10,4A2,2 0 0,1 12,2A2,2 0 0,1 14,4C14,4.1 14,4.19 14,4.29C16.97,5.17 19,7.9 19,11V17L21,19M14,21A2,2 0 0,1 12,23A2,2 0 0,1 10,21" fill="#767676"/></svg>
<div class="si" style="top:800.0px">chris</div>
<div class="a" style="left:236.4px;top:747px;width:21px;height:21px;border-radius:50%;background:#ff9800;color:#fff;font-size:14px;line-height:21px;text-align:center">1</div>
<div class="a" style="left:10px;top:788px;width:42.5px;height:42.5px;border-radius:50%;background:#b3e5fc;color:#333;font-size:15px;line-height:40px;text-align:center;padding-top:0">c</div>
<svg style="left:264px;top:62.5px" width="8" height="6" viewBox="0 0 8 6"><path d="M4 1L7 5H1Z" fill="#c4c4c4"/></svg>
<div class="a" style="left:265.8px;top:70.5px;width:5px;height:512.5px;border-radius:2.5px;background:#c1c1c1"></div>
<svg style="left:264px;top:672.5px" width="8" height="6" viewBox="0 0 8 6"><path d="M4 5L7 1H1Z" fill="#c4c4c4"/></svg>
<div class="a" style="left:273.5px;top:0;width:2069.0px;height:68.3px;background:#03a9f4;box-shadow:0 2px 4px rgba(0,0,0,.22);border-top-right-radius:5px;z-index:2"></div>
<div style="position:absolute;left:0;top:0;z-index:3">
<svg style="left:299.5px;top:22.5px" width="26.0" height="26.0" viewBox="0 0 24 24"><path d="M10,4H4C2.89,4 2,4.89 2,6V18A2,2 0 0,0 4,20H20A2,2 0 0,0 22,18V8C22,6.89 21.1,6 20,6H12L10,4Z" fill="#fff"/></svg>
<svg style="left:379.0px;top:22.5px" width="26.0" height="26.0" viewBox="0 0 24 24"><path d="M13.5,8H12V13L16.28,15.54L17,14.33L13.5,12.25V8M13,3A9,9 0 0,0 4,12H1L4.96,16.03L9,12H6A7,7 0 0,1 13,5A7,7 0 0,1 20,12A7,7 0 0,1 13,19C11.07,19 9.32,18.21 8.06,16.94L6.64,18.36C8.27,20 10.5,21 13,21A9,9 0 0,0 22,12A9,9 0 0,0 13,3" fill="#fff"/></svg>
<svg style="left:2169.9px;top:22.2px" width="26" height="26" viewBox="0 0 24 24"><path d="M19,6.41L17.59,5L12,10.59L6.41,5L5,6.41L10.59,12L5,17.59L6.41,19L12,13.41L17.59,19L19,17.59L13.41,12L19,6.41Z" fill="#fff"/></svg>
<svg style="left:2226.5px;top:21.5px" width="26.0" height="26.0" viewBox="0 0 24 24"><path d="M9.5,3A6.5,6.5 0 0,1 16,9.5C16,11.11 15.41,12.59 14.44,13.73L14.71,14H15.5L20.5,19L19,20.5L14,15.5V14.71L13.73,14.44C12.59,15.41 11.11,16 9.5,16A6.5,6.5 0 0,1 3,9.5A6.5,6.5 0 0,1 9.5,3M9.5,5C7,5 5,7 5,9.5C5,12 7,14 9.5,14C12,14 14,12 14,9.5C14,7 12,5 9.5,5Z" fill="#fff"/></svg>
<svg style="left:2300.0px;top:21.5px" width="28.0" height="28.0" viewBox="0 0 24 24"><path d="M12,15.5A3.5,3.5 0 0,1 8.5,12A3.5,3.5 0 0,1 12,8.5A3.5,3.5 0 0,1 15.5,12A3.5,3.5 0 0,1 12,15.5M19.43,12.97C19.47,12.65 19.5,12.33 19.5,12C19.5,11.67 19.47,11.34 19.43,11L21.54,9.37C21.73,9.22 21.78,8.95 21.66,8.73L19.66,5.27C19.54,5.05 19.27,4.96 19.050,5.05L16.56,6.05C16.04,5.66 15.5,5.32 14.87,5.07L14.5,2.42C14.46,2.18 14.25,2 14,2H10C9.75,2 9.54,2.18 9.5,2.42L9.13,5.07C8.5,5.32 7.96,5.66 7.44,6.05L4.95,5.05C4.73,4.96 4.46,5.05 4.34,5.27L2.34,8.73C2.21,8.95 2.27,9.22 2.46,9.37L4.57,11C4.53,11.34 4.5,11.67 4.5,12C4.5,12.330 4.53,12.65 4.57,12.97L2.46,14.63C2.27,14.78 2.21,15.05 2.34,15.27L4.34,18.73C4.46,18.95 4.73,19.030 4.95,18.95L7.44,17.94C7.96,18.34 8.5,18.68 9.13,18.93L9.5,21.58C9.54,21.82 9.75,22 10,22H14C14.25,22 14.46,21.82 14.5,21.58L14.87,18.93C15.5,18.67 16.04,18.34 16.56,17.94L19.05,18.95C19.27,19.03 19.54,18.95 19.66,18.73L21.66,15.27C21.78,15.05 21.73,14.78 21.54,14.63L19.43,12.97Z" fill="#fff"/></svg>
</div>
<div class="lab" style="left:298.0px;top:94.8px">Trigger platforms</div>
<div class="val" style="left:298.0px;top:123.8px;color:#212121;letter-spacing:0.15px">Select trigger platform</div>
<div class="ul" style="left:297.5px;top:156.6px;width:450.5px"></div>
<div class="arr" style="left:757.5px;top:128.6px"></div>
<div class="lab" style="left:298.0px;top:180.8px">Events</div>
<div class="val" style="left:298.0px;top:209.8px;color:#212121">*</div>
<div class="ul" style="left:297.5px;top:242.6px;width:450.5px"></div>
<div class="arr" style="left:757.5px;top:214.6px"></div>
<div class="lab" style="left:298.0px;top:266.5px">Search entity</div>
<div class="val" style="left:298.0px;top:295.5px;color:#c4c4c4">sensor.example</div>
<div class="ul" style="left:297.5px;top:328.3px;width:469.1px"></div>
<div class="lab" style="left:298.0px;top:352.6px">Entities</div>
<div class="val" style="left:301.5px;top:381.6px;color:#212121">Zigbee Bulb (light.zigbee_bulb)</div>
<div class="ul" style="left:297.5px;top:414.4px;width:450.5px"></div>
<div class="arr" style="left:757.5px;top:386.4px"></div>
<div class="lab" style="left:298.0px;top:439.1px">Conditions</div>
<div class="val" style="left:298.0px;top:468.1px;color:#212121">Select condition</div>
<div class="ul" style="left:297.5px;top:500.9px;width:450.5px"></div>
<div class="arr" style="left:757.5px;top:472.9px"></div>
<div class="lab" style="left:298.0px;top:525.4px">Services</div>
<div class="val" style="left:298.0px;top:554.4px;color:#212121">alarm_control_panel.alarm_arm_away</div>
<div class="ul" style="left:297.5px;top:587.2px;width:450.5px"></div>
<div class="arr" style="left:757.5px;top:559.2px"></div>
<div class="a" style="left:802.5px;top:84.0px;width:1527.5px;height:71.5px;background:#f4f4f4;box-shadow:0 1px 3px rgba(0,0,0,.2);border-radius:2px"></div>
<div class="a" style="left:815.6px;top:99.0px;font-size:16.6px;color:#212121;white-space:nowrap;letter-spacing:0.02px">/homeassistant/configuration.yaml</div>
<div class="a" style="left:815.0px;top:132.5px;width:1503.0px;height:1px;background:#9a9a9a"></div>
<svg style="left:2294.3px;top:96.7px" width="26.0" height="26.0" viewBox="0 0 24 24"><path d="M12 2C6.5 2 2 6.5 2 12S6.5 22 12 22 22 17.5 22 12 17.5 2 12 2M10 17L5 12L6.41 10.59L10 14.17L17.59 6.58L19 8L10 17Z" fill="#4caf50"/></svg>
<div class="a" style="left:2302.0px;top:103.5px;width:11px;height:11px;background:#fff;z-index:-1"></div>
<div id="ed" class="a" style="left:790.5px;top:144.5px;width:1552.0px;height:672.0px;background:#fff;box-shadow:-2px 0 4px rgba(0,0,0,.12);overflow:hidden">
<div class="a" style="left:0;top:0;width:48.3px;height:672px;background:#efefef;border-left:1px solid #d6d6d6"></div>
<div class="a" style="left:0;top:63.70px;width:48.3px;height:12.74px;background:#dcdcdc"></div>
<div class="a" style="left:48.3px;top:63.70px;width:1600px;height:12.74px;background:#ebebeb"></div>
<div class="a" style="left:565.0px;top:0;width:1px;height:672px;background:#e8e8e8"></div>
<div class="a" style="left:109.7px;top:64.20px;width:1px;height:11.74px;background:#333"></div>
<div class="ln" style="top:0.00px;left:0;width:34.7px;padding-top:3.3px">1</div>
<div class="code" style="left:52.6px;top:0.00px;padding-top:1.6px"><span class="iv">¬</span></div>
<div class="ln" style="top:12.74px;left:0;width:34.7px;padding-top:3.3px">2</div>
<div class="code" style="left:52.6px;top:12.74px;padding-top:1.6px"><span class="cm">#</span><span class="iv">·</span><span class="cm">Loads</span><span class="iv">·</span><span class="cm">default</span><span class="iv">·</span><span class="cm">set</span><span class="iv">·</span><span class="cm">of</span><span class="iv">·</span><span class="cm">integrations.</span><span class="iv">·</span><span class="cm">Do</span><span class="iv">·</span><span class="cm">not</span><span class="iv">·</span><span class="cm">remove.</span><span class="iv">¬</span></div>
<div class="ln" style="top:25.48px;left:0;width:34.7px;padding-top:3.3px">3</div>
<div class="code" style="left:52.6px;top:25.48px;padding-top:1.6px"><span class="ky">default_config</span><span class="kw">:</span><span class="iv">¬</span></div>
<div class="ln" style="top:38.22px;left:0;width:34.7px;padding-top:3.3px">4</div>
<div class="code" style="left:52.6px;top:38.22px;padding-top:1.6px"><span class="iv">¬</span></div>
<div class="ln" style="top:50.96px;left:0;width:34.7px;padding-top:3.3px">5</div>
<div class="code" style="left:52.6px;top:50.96px;padding-top:1.6px"><span class="cm">#</span><span class="iv">·</span><span class="cm">Load</span><span class="iv">·</span><span class="cm">frontend</span><span class="iv">·</span><span class="cm">themes</span><span class="iv">·</span><span class="cm">from</span><span class="iv">·</span><span class="cm">the</span><span class="iv">·</span><span class="cm">themes</span><span class="iv">·</span><span class="cm">folder</span><span class="iv">¬</span></div>
<div class="ln" style="top:63.70px;left:0;width:34.7px;padding-top:3.3px">6</div>
<div class="code" style="left:52.6px;top:63.70px;padding-top:1.6px"><span class="ky">frontend</span><span class="kw">:</span><span class="iv">¬</span></div>
<div class="ln" style="top:76.44px;left:0;width:34.7px;padding-top:3.3px">7</div>
<div class="code" style="left:52.6px;top:76.44px;padding-top:1.6px"><span class="iv">·</span><span class="iv">·</span><span class="ky">themes</span><span class="kw">:</span><span class="iv">·</span><span class="tx">!include_dir_merge_named</span><span class="iv">·</span><span class="tx">themes</span><span class="iv">¬</span></div>
<div class="ln" style="top:89.18px;left:0;width:34.7px;padding-top:3.3px">8</div>
<div class="code" style="left:52.6px;top:89.18px;padding-top:1.6px"><span class="iv">¬</span></div>
<div class="ln" style="top:101.92px;left:0;width:34.7px;padding-top:3.3px">9</div>
<div class="code" style="left:52.6px;top:101.92px;padding-top:1.6px"><span class="ky">automation</span><span class="kw">:</span><span class="iv">·</span><span class="tx">!include</span><span class="iv">·</span><span class="tx">automations.yaml</span><span class="iv">¬</span></div>
<div class="ln" style="top:114.66px;left:0;width:34.7px;padding-top:3.3px">10</div>
<div class="code" style="left:52.6px;top:114.66px;padding-top:1.6px"><span class="ky">script</span><span class="kw">:</span><span class="iv">·</span><span class="tx">!include</span><span class="iv">·</span><span class="tx">scripts.yaml</span><span class="iv">¬</span></div>
<div class="ln" style="top:127.40px;left:0;width:34.7px;padding-top:3.3px">11</div>
<div class="code" style="left:52.6px;top:127.40px;padding-top:1.6px"><span class="ky">scene</span><span class="kw">:</span><span class="iv">·</span><span class="tx">!include</span><span class="iv">·</span><span class="tx">scenes.yaml</span><span class="iv">¬</span></div>
<div class="ln" style="top:140.14px;left:0;width:34.7px;padding-top:3.3px">12</div>
<div class="code" style="left:52.6px;top:140.14px;padding-top:1.6px"><span class="cm">#</span><span class="iv">·</span><span class="cm">Amazon</span><span class="iv">·</span><span class="cm">Echo</span><span class="iv">·</span><span class="cm">example</span><span class="iv">·</span><span class="cm">configuration.yaml</span><span class="iv">·</span><span class="cm">entry</span><span class="iv">¬</span></div>
<div class="ln" style="top:152.88px;left:0;width:34.7px;padding-top:3.3px">13</div>
<div class="code" style="left:52.6px;top:152.88px;padding-top:1.6px"><span class="ky">emulated_hue</span><span class="kw">:</span><span class="iv">¬</span></div>
<div class="ln" style="top:165.62px;left:0;width:34.7px;padding-top:3.3px">14</div>
<div class="code" style="left:52.6px;top:165.62px;padding-top:1.6px"><span class="iv">·</span><span class="iv">·</span><span class="ky">host_ip</span><span class="kw">:</span><span class="iv">·</span><span class="tx">192.168.1.181</span><span class="iv">¬</span></div>
<div class="ln" style="top:178.36px;left:0;width:34.7px;padding-top:3.3px">15</div>
<div class="code" style="left:52.6px;top:178.36px;padding-top:1.6px"><span class="iv">·</span><span class="iv">·</span><span class="ky">listen_port</span><span class="kw">:</span><span class="iv">·</span><span class="nm">80</span><span class="iv">¬</span></div>
<div class="ln" style="top:191.10px;left:0;width:34.7px;padding-top:3.3px">16</div>
<div class="code" style="left:52.6px;top:191.10px;padding-top:1.6px"><span class="iv">·</span><span class="iv">·</span><span class="ky">expose_by_default</span><span class="kw">:</span><span class="iv">·</span><span class="bl">true</span><span class="iv">¬</span></div>
<div class="ln" style="top:203.84px;left:0;width:34.7px;padding-top:3.3px">17</div>
<div class="code" style="left:52.6px;top:203.84px;padding-top:1.6px"><span class="iv">·</span><span class="iv">·</span><span class="ky">entities</span><span class="kw">:</span><span class="iv">¬</span></div>
<div class="ln" style="top:216.58px;left:0;width:34.7px;padding-top:3.3px">18</div>
<div class="code" style="left:52.6px;top:216.58px;padding-top:1.6px"><span class="iv">·</span><span class="iv">·</span><span class="ky">light_bed_4</span><span class="kw">:</span><span class="iv">¬</span></div>
<div class="ln" style="top:229.32px;left:0;width:34.7px;padding-top:3.3px">19</div>
<div class="code" style="left:52.6px;top:229.32px;padding-top:1.6px"><span class="iv">·</span><span class="iv">·</span><span class="ky">friendly_name</span><span class="kw">:</span><span class="iv">·</span><span class="tx">Bed</span><span class="iv">·</span><span class="nm">4</span><span class="iv">¬</span></div>
<div class="ln" style="top:242.06px;left:0;width:34.7px;padding-top:3.3px">20</div>
<div class="code" style="left:52.6px;top:242.06px;padding-top:1.6px"><span class="cm">#</span><span class="iv">·</span><span class="cm">Amazon</span><span class="iv">·</span><span class="cm">Echo/Alexa</span><span class="iv">·</span><span class="cm">stopped</span><span class="iv">·</span><span class="cm">working</span><span class="iv">·</span><span class="cm">on</span><span class="iv">·</span><span class="cm">different</span><span class="iv">·</span><span class="cm">ports.</span><span class="iv">·</span><span class="cm">Search</span><span class="iv">·</span><span class="cm">for</span><span class="iv">·</span><span class="cm">&quot;Philips</span><span class="iv">·</span><span class="cm">Hue</span><span class="iv">·</span><span class="cm">Bridge</span><span class="iv">·</span><span class="cm">V1</span><span class="iv">·</span><span class="cm">(round)&quot;</span><span class="iv">·</span><span class="cm">in</span><span class="iv">·</span><span class="cm">the</span><span class="iv">·</span><span class="cm">Alexa</span><span class="iv">·</span><span class="cm">App</span><span class="iv">·</span><span class="cm">to</span><span class="iv">·</span><span class="cm">discover</span><span class="iv">·</span><span class="cm">devices</span><span class="iv">¬</span></div>
<div class="ln" style="top:254.80px;left:0;width:34.7px;padding-top:3.3px">21</div>
<div class="code" style="left:52.6px;top:254.80px;padding-top:1.6px"><span class="iv">¶</span></div>
<svg style="left:38.0px;top:68.20px" width="7" height="5" viewBox="0 0 7 5"><path d="M0.5 0.5H6.5L3.5 4.5Z" fill="#666"/></svg>
<svg style="left:38.0px;top:157.38px" width="7" height="5" viewBox="0 0 7 5"><path d="M0.5 0.5H6.5L3.5 4.5Z" fill="#666"/></svg>
</div>
<div class="fab" style="left:2266.9px;top:397.4px;width:43.0px;height:43.0px;background:#ffeb3b;z-index:4"></div>
<div style="position:absolute;left:0;top:0;z-index:5">
<svg style="left:2274.8px;top:405.3px" width="26.6" height="26.6" viewBox="0 0 24 24"><path d="M12.5,8C9.85,8 7.45,9 5.6,10.6L2,7V16H11L7.38,12.38C8.77,11.22 10.54,10.5 12.5,10.5C16.04,10.5 19.05,12.81 20.1,16L22.47,15.22C21.08,11.03 17.15,8 12.5,8Z" fill="#fff"/></svg>
</div>
<div class="fab" style="left:2266.9px;top:456.1px;width:43.0px;height:43.0px;background:#4caf50;z-index:4"></div>
<div style="position:absolute;left:0;top:0;z-index:5">
<svg style="left:2274.8px;top:464.0px" width="26.6" height="26.6" viewBox="0 0 24 24"><path d="M18.4,10.6C16.55,9 14.15,8 11.5,8C6.85,8 2.92,11.03 1.54,15.22L3.9,16C4.95,12.81 7.95,10.5 11.5,10.5C13.45,10.5 15.23,11.22 16.62,12.38L13,16H22V7L18.4,10.6Z" fill="#fff"/></svg>
</div>
<div class="fab" style="left:2266.9px;top:514.9px;width:43.0px;height:43.0px;background:#2196f3;z-index:4"></div>
<div style="position:absolute;left:0;top:0;z-index:5">
<svg style="left:2274.8px;top:522.8px" width="26.6" height="26.6" viewBox="0 0 24 24"><path d="M11,13H21V11H11M11,9H21V7H11M3,3V5H21V3M11,17H21V15H11M3,8V16L7,12M3,21H21V19H3V21Z" fill="#fff"/></svg>
</div>
<div class="fab" style="left:2266.9px;top:573.3px;width:43.0px;height:43.0px;background:#ff9800;z-index:4"></div>
<div style="position:absolute;left:0;top:0;z-index:5">
<svg style="left:2274.8px;top:581.2px" width="26.6" height="26.6" viewBox="0 0 24 24"><path d="M11,13H21V11H11M11,9H21V7H11M3,3V5H21V3M3,21H21V19H3M3,12L7,16V8M11,17H21V15H11V17Z" fill="#fff"/></svg>
</div>
<div class="fab" style="left:2266.9px;top:632.4px;width:43.0px;height:43.0px;background:#795548;z-index:4"></div>
<div style="position:absolute;left:0;top:0;z-index:5">
<svg style="left:2278.4px;top:643.9px" width="20" height="20" viewBox="0 0 20 20"><circle cx="10" cy="10" r="6.2" fill="none" stroke="#fff" stroke-width="2.2"/><path d="M1 1H6L1 6Z M19 1H14L19 6Z M1 19H6L1 14Z M19 19H14L19 14Z" fill="#fff"/></svg>
</div>
<div class="fab" style="left:2266.9px;top:691.3px;width:43.0px;height:43.0px;background:#9e9e9e;z-index:4"></div>
<div style="position:absolute;left:0;top:0;z-index:5">
<div class="a" style="left:2278.4px;top:703.8px;width:20px;text-align:center;font-size:15px;font-weight:bold;color:#fff">#</div>
</div>
<div class="fab" style="left:2258.8px;top:758.8px;width:59.5px;height:59.5px;background:#ff5252;z-index:4"></div>
<div style="position:absolute;left:0;top:0;z-index:5">
<svg style="left:2274.4px;top:774.5px" width="27.5" height="27.5" viewBox="0 0 24 24"><path d="M20.71,7.04C21.1,6.65 21.1,6 20.71,5.63L18.37,3.29C18,2.9 17.35,2.9 16.96,3.29L15.12,5.12L18.87,8.87M3,17.25V21H6.75L17.81,9.93L14.06,6.18L3,17.25Z" fill="#fff"/></svg>
</div>
</div>
</body></html>
